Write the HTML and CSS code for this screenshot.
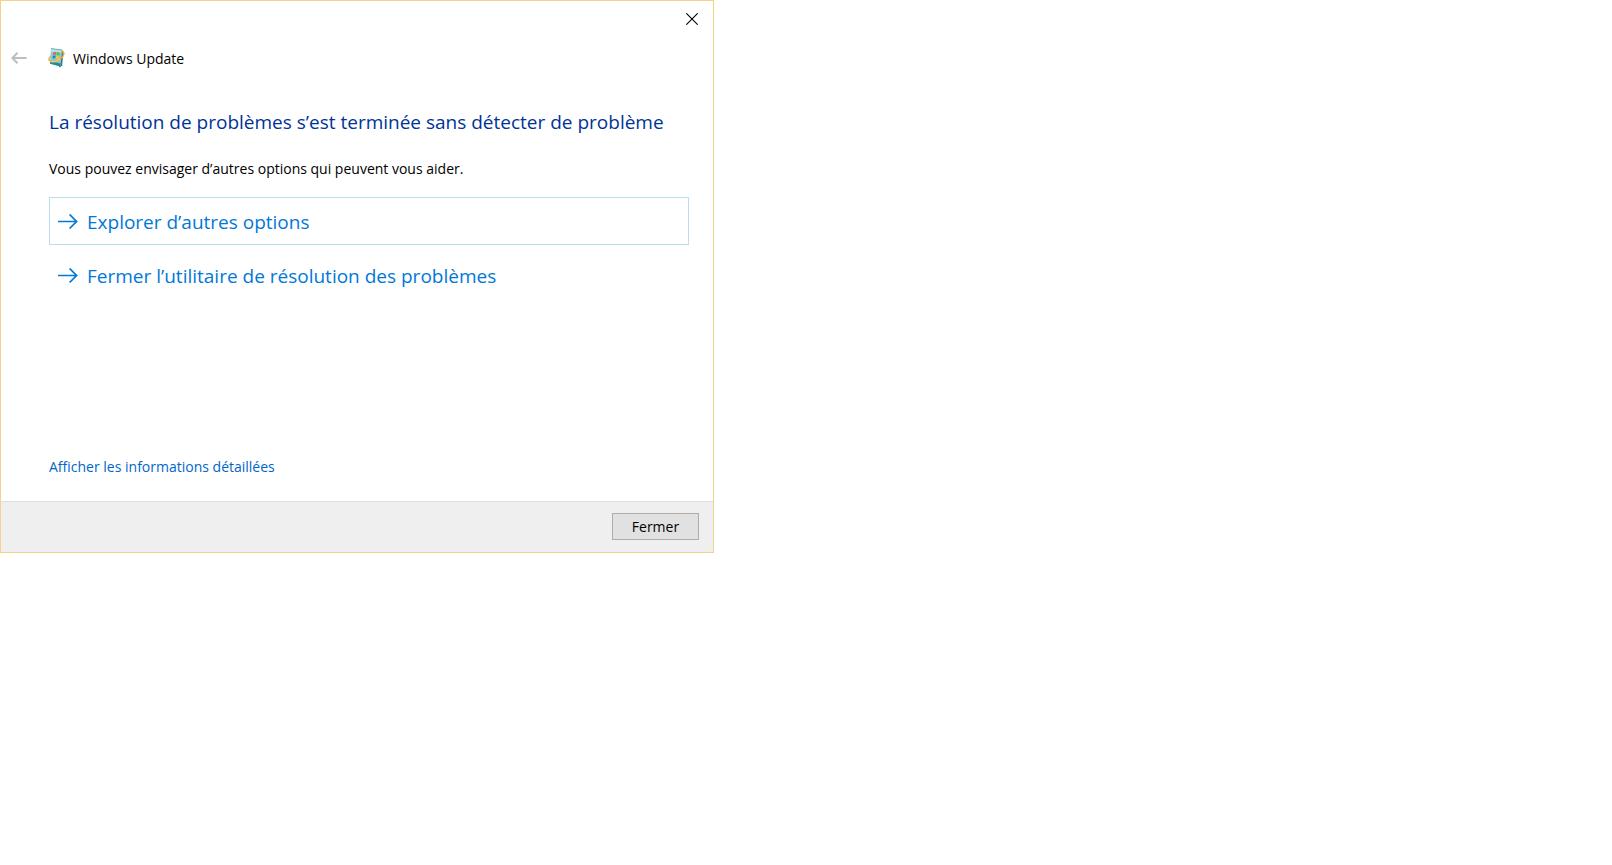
FILE: index.html
```html
<!DOCTYPE html>
<html lang="fr">

<head>
    <meta charset="UTF-8" />
    <meta name="viewport" content="width=device-width, initial-scale=1.0" />
    <title>Windows Update</title>
    <link rel="stylesheet" href="styles.css">
</head>

<body>
    <main class="window">
        <div class="titlebar">
            <button type="button" class="icon-btn close" aria-label="Fermer la fenêtre">
                <svg width="12" height="12" viewBox="0 0 12 12">
                    <path d="M0.3 0.3L11.7 11.7M11.7 0.3L0.3 11.7" fill="none" stroke="#000" stroke-width="1.1" />
                </svg>
            </button>
        </div>

        <header class="header">
            <button type="button" class="icon-btn back" aria-label="Précédent" disabled>
                <svg width="16" height="12" viewBox="0 0 16 12">
                    <path d="M6.5 0.8L1.3 6L6.5 11.2M1.3 6H15.5" fill="none" stroke="#bdbdbd" stroke-width="2" />
                </svg>
            </button>
            <svg class="logo" width="18" height="20" viewBox="0 0 18 20">
                <path d="M1.5 12.6C0.2 11.2 1.2 9.4 3.6 7.6" fill="none" stroke="#f2a62b" stroke-width="1.3" />
                <path d="M3 0.5L14 2L12 18.6L2 15.5Z" fill="#86cbd3" />
                <path d="M3 0.5L14 2L13.6 4.8L2.8 3.8Z" fill="#b9e2e6" />
                <path d="M14 2L15.4 3.4L14.2 17.2L12 19.4Z" fill="#287e8c" />
                <path d="M2.2 13L12.6 15.6L12 19.4L10.4 18L2 15.8Z" fill="#2c8995" />
                <path d="M3 0.5L14 2" stroke="#4a97a3" stroke-width="0.7" />
                <path d="M5.4 4.3L8.2 3.8L7.8 6.7L5 7.1Z" fill="#e8683b" />
                <path d="M8.9 4L11.8 4.7L11.3 7.5L8.5 6.9Z" fill="#68b34a" />
                <path d="M4.9 7.8L7.7 7.4L7.3 10.2L4.5 10.6Z" fill="#2c7fd0" />
                <path d="M8.4 7.6L11.2 8.2L10.7 11L8 10.4Z" fill="#f4c83c" />
                <path d="M1.4 11.6C2.4 15.2 8.5 14.3 12.7 10.6C16.4 7.4 17.4 3.5 13.2 3.8" fill="none" stroke="#f5ab31" stroke-width="1.4" />
                <path d="M2.6 13.3C5 14.4 9.2 13.2 12.3 10.7" fill="none" stroke="#ffe6a3" stroke-width="0.6" />
            </svg>
            <span class="app-name">Windows Update</span>
        </header>

        <section class="content">
            <h1>La résolution de problèmes s’est terminée sans détecter de problème</h1>
            <p>Vous pouvez envisager d’autres options qui peuvent vous aider.</p>

            <div class="options">
                <button type="button" class="option selected">
                    <svg width="20" height="16" viewBox="0 0 20 16">
                        <path d="M0 7.5H18.5M11.6 0.5L18.6 7.5L11.6 14.5" fill="none" stroke="#0078d7" stroke-width="1.7" />
                    </svg>
                    <span>Explorer d’autres options</span>
                </button>
                <button type="button" class="option">
                    <svg width="20" height="16" viewBox="0 0 20 16">
                        <path d="M0 7.5H18.5M11.6 0.5L18.6 7.5L11.6 14.5" fill="none" stroke="#0078d7" stroke-width="1.7" />
                    </svg>
                    <span>Fermer l’utilitaire de résolution des problèmes</span>
                </button>
            </div>

            <a href="#" class="details">Afficher les informations détaillées</a>
        </section>

        <footer class="footer">
            <button type="button" class="btn">Fermer</button>
        </footer>
    </main>
</body>

</html>
```
FILE: styles.css
```css
* {
    box-sizing: border-box;
}

body {
    margin: 0;
    background-color: #fff;
    color: #000;
    font-family: "Open Sans", "Noto Sans", sans-serif;
    font-size: 14px;
    line-height: 20px;
}

button {
    font: inherit;
}

svg {
    display: block;
    flex: none;
}

.window {
    display: flex;
    flex-direction: column;
    max-width: 714px;
    border: 1px solid #f3d287;
    background-color: #fff;
}

.titlebar {
    display: flex;
    justify-content: flex-end;
    padding: 6px 9px;
}

.icon-btn {
    display: flex;
    align-items: center;
    justify-content: center;
    border: none;
    padding: 0;
    background: none;
}

.close {
    width: 24px;
    height: 24px;
}

.header {
    display: flex;
    align-items: center;
    padding: 10px 10px 0;
}

.back {
    width: 16px;
    height: 20px;
}

.logo {
    margin-left: 21px;
}

.app-name {
    margin-left: 7px;
    padding-top: 2px;
}

.content {
    display: flex;
    flex-direction: column;
    padding: 39px 24px 24px 48px;
}

h1 {
    margin: 0;
    color: #003399;
    font-size: 19px;
    font-weight: 400;
    line-height: 28px;
}

p {
    margin: 23px 0 18px;
}

.options {
    display: flex;
    flex-direction: column;
    gap: 6px;
}

.option {
    display: flex;
    align-items: center;
    gap: 9px;
    min-height: 48px;
    padding: 2px 8px 0;
    border: 1px solid transparent;
    background: none;
    color: #0078d7;
    font-size: 19px;
    line-height: 28px;
    text-align: left;
}

.selected {
    border-color: #bcdcf4;
}

.details {
    align-self: flex-start;
    margin-top: 158px;
    color: #0066cc;
    text-decoration: none;
}

.footer {
    display: flex;
    justify-content: flex-end;
    padding: 11px 14px 12px;
    border-top: 1px solid #dfdfdf;
    background-color: #efefef;
}

.btn {
    min-width: 87px;
    height: 27px;
    border: 1px solid #adadad;
    padding: 0 12px;
    background-color: #e1e1e1;
    color: #000;
}
```
